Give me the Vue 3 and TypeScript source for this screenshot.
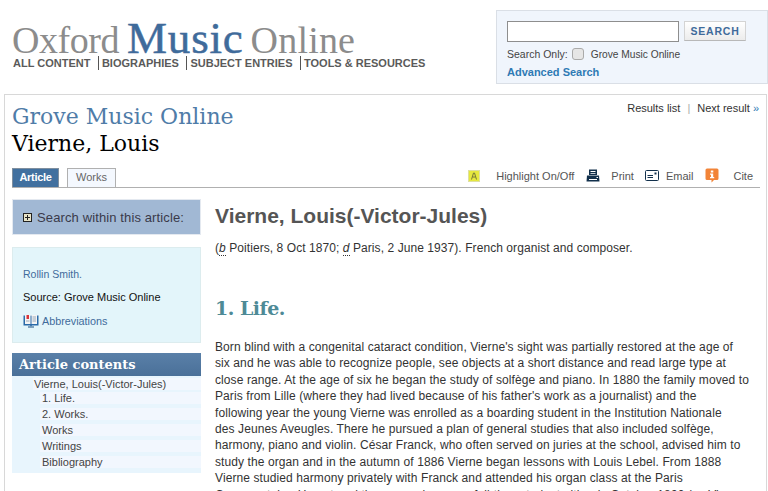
<template>
  <div class="page">
    <header class="top">
      <div class="brand">
        <div class="logo">
          <span class="logo-grey">Oxford</span>
          <span class="logo-blue">Music</span>
          <span class="logo-grey logo-online">Online</span>
        </div>
        <nav class="mainnav">
          <a v-for="(item, i) in navItems" :key="item" :class="{ sep: i > 0 }">{{ item }}</a>
        </nav>
      </div>
      <form class="searchbox" @submit.prevent>
        <div class="search-row">
          <input class="search-input" type="text" />
          <button class="search-btn" type="button">SEARCH</button>
        </div>
        <div class="only-row">
          <span>Search Only:</span>
          <span class="fake-check"></span>
          <span class="only-name">Grove Music Online</span>
        </div>
        <a class="adv">Advanced Search</a>
      </form>
    </header>

    <main class="panel">
      <div class="title-row">
        <div>
          <div class="title-site">Grove Music Online</div>
          <h1 class="title-entry">Vierne, Louis</h1>
        </div>
        <div class="results-nav">
          <a>Results list</a><span class="bar">|</span><a>Next result <span class="raquo">»</span></a>
        </div>
      </div>

      <div class="tabbar">
        <div class="tabs">
          <span class="tab active">Article</span>
          <span class="tab">Works</span>
        </div>
        <div class="tools">
          <span class="tool tool-hl">
            <svg width="12" height="12" viewBox="0 0 12 12">
              <rect width="12" height="12" fill="#dfe0a0" />
              <rect x="1" y="1" width="10" height="10" fill="#e6e83e" />
              <path d="M3.500 9.500 L5.500 3 H6.500 L8.500 9.500 M4.500 7 H7.500" fill="none" stroke="#77773a" />
            </svg>
            <span>Highlight On/Off</span>
          </span>
          <span class="tool tool-print">
            <svg width="14" height="14" viewBox="0 0 14 14">
              <path d="M3 0.500 H11 V6 H3 Z M4.500 2 V3 H9.500 V2 Z M4.500 4 V4.800 H9.500 V4 Z" fill="#12304c" fill-rule="evenodd" />
              <path d="M1 6.500 H13 L13.500 12.500 H0.500 Z" fill="#12304c" />
              <rect x="3" y="10" width="8" height="1" fill="#fff" />
              <rect x="10.500" y="8" width="1.500" height="1" fill="#fff" />
            </svg>
            <span>Print</span>
          </span>
          <span class="tool tool-mail">
            <svg width="14" height="11" viewBox="0 0 14 11">
              <rect x="0.500" y="0.500" width="13" height="10" rx="1" fill="#fff" stroke="#12304c" />
              <path d="M2.500 7.500 H8 M2.500 5.500 H8" stroke="#12304c" fill="none" />
              <rect x="9.500" y="2.500" width="2" height="2" fill="#12304c" />
            </svg>
            <span>Email</span>
          </span>
          <span class="tool tool-cite">
            <svg width="14" height="15" viewBox="0 0 14 15">
              <path d="M2 0.500 H12 Q13.500 0.500 13.500 2 V10.500 Q13.500 12 12 12 H9 L6.500 14.500 V12 H2 Q0.500 12 0.500 10.500 V2 Q0.500 0.500 2 0.500 Z" fill="#f28438" />
              <rect x="5.800" y="2.500" width="2.500" height="2" fill="#fff" />
              <path d="M5 5.500 H8.200 V9 H9.200 V10.200 H5 V9 H6 V6.700 H5 Z" fill="#fff" />
            </svg>
            <span>Cite</span>
          </span>
        </div>
      </div>

      <div class="columns">
        <aside class="side">
          <div class="within">
            <svg class="plus" width="9" height="9" viewBox="0 0 9 9">
              <rect x="0.500" y="0.500" width="8" height="8" fill="#e8e4c8" stroke="#222" />
              <path d="M2 4.500 H7 M4.500 2 V7" stroke="#222" />
            </svg>
            <span>Search within this article:</span>
          </div>

          <div class="info">
            <a class="info-author">Rollin Smith.</a>
            <div class="info-source">Source: Grove Music Online</div>
            <a class="info-abbr">
              <svg width="16" height="14" viewBox="0 0 16 14">
                <path d="M0.500 1.500 H7.500 L8 2 L8.500 1.500 H15.500 V11.500 H9 L8 12.500 L7 11.500 H0.500 Z" fill="#2a6aa8" />
                <rect x="2" y="1" width="5.500" height="9" fill="#f4f4f4" />
                <rect x="8.500" y="1" width="5.500" height="9" fill="#f4f4f4" />
                <rect x="3.500" y="1" width="2.500" height="4" fill="#d8343a" />
                <path d="M9.500 3 H13 M9.500 5 H13 M9.500 7 H13 M3 7 H6.500" stroke="#9aa9b8" />
                <rect x="5" y="12.500" width="6" height="1" fill="#1d4f80" />
              </svg>
              <span>Abbreviations</span>
            </a>
          </div>

          <div class="toc">
            <div class="toc-head">Article contents</div>
            <ul class="toc-list">
              <li class="toc-root"><span>Vierne, Louis(-Victor-Jules)</span></li>
              <li v-for="row in tocRows" :key="row" class="toc-item"><span>{{ row }}</span></li>
            </ul>
          </div>
        </aside>

        <article class="article">
          <h2 class="art-title">Vierne, Louis(-Victor-Jules)</h2>
          <p class="art-lead">(<abbr>b</abbr> Poitiers, 8 Oct 1870; <abbr>d</abbr> Paris, 2 June 1937). French organist and composer.</p>
          <h3 class="art-section">1. Life.</h3>
          <p class="art-body">
            <span v-for="line in bodyLines" :key="line" class="art-line">{{ line }}</span>
          </p>
        </article>
      </div>
    </main>
  </div>
</template>

<script setup lang="ts">
const navItems: string[] = ['ALL CONTENT', 'BIOGRAPHIES', 'SUBJECT ENTRIES', 'TOOLS & RESOURCES']
const tocRows: string[] = ['1. Life.', '2. Works.', 'Works', 'Writings', 'Bibliography']
const bodyLines: string[] = [
  "Born blind with a congenital cataract condition, Vierne's sight was partially restored at the age of",
  'six and he was able to recognize people, see objects at a short distance and read large type at',
  'close range. At the age of six he began the study of solfège and piano. In 1880 the family moved to',
  "Paris from Lille (where they had lived because of his father's work as a journalist) and the",
  'following year the young Vierne was enrolled as a boarding student in the Institution Nationale',
  'des Jeunes Aveugles. There he pursued a plan of general studies that also included solfège,',
  'harmony, piano and violin. César Franck, who often served on juries at the school, advised him to',
  'study the organ and in the autumn of 1886 Vierne began lessons with Louis Lebel. From 1888',
  'Vierne studied harmony privately with Franck and attended his organ class at the Paris',
  'Conservatoire. He entered the organ class as a full-time student either in October 1890 (as Vierne',
]
</script>

<style>
html, body { margin: 0; background: #fff; overflow: hidden; }
</style>

<style scoped>
.page {
  width: 768px; height: 491px; overflow: hidden; box-sizing: border-box;
  font-family: "Liberation Sans", Arial, sans-serif; font-size: 11px; color: #333;
}
a { cursor: pointer; }

.top { display: flex; justify-content: space-between; height: 94px; padding-top: 10px; box-sizing: border-box; }
.brand { padding-left: 12px; }
.logo { display: flex; align-items: baseline; height: 46px; box-sizing: border-box; padding-top: 9px; font-family: "Liberation Serif", serif; white-space: nowrap; }
.logo-grey { font-size: 38px; line-height: 38px; color: #8c8c8c; letter-spacing: -0.45px; }
.logo-online { letter-spacing: 0.2px; }
.logo-blue { margin: 0 7px 0 8px; font-size: 45px; line-height: 38px; letter-spacing: 0.8px; color: #3f6b9b; -webkit-text-stroke: 0.5px #3f6b9b; }
.mainnav { display: flex; padding-left: 1px; font-size: 11px; line-height: 14px; font-weight: 700; color: #5a5a5a; white-space: nowrap; }
.mainnav a + a { margin-left: 7.500px; }
.mainnav .sep { padding-left: 3px; border-left: 1px solid #555; }

.searchbox { width: 272px; height: 74px; box-sizing: border-box; border: 1px solid #dadfe6; background: #f0f5fc; padding: 10px 10px 0; }
.search-row { display: flex; gap: 5px; }
.search-input { width: 172px; height: 21px; box-sizing: border-box; border: 1px solid #8e8e8e; background: #fff; padding: 0; margin: 0; }
.search-btn {
  width: 62px; height: 20px; padding: 0; border: 1px solid #d4d4d4; border-bottom-color: #b8b8b8;
  background: linear-gradient(#fff, #ececec); color: #3f6b9b;
  font: 700 10.500px "Liberation Sans", Arial, sans-serif; letter-spacing: 0.8px;
}
.only-row { display: flex; align-items: center; margin-top: 5px; height: 14px; font-size: 10.500px; color: #444; white-space: nowrap; }
.fake-check { width: 10px; height: 10px; margin: 0 7px 0 4px; border: 1px solid #aaa; border-radius: 3px; background: #e6e6e6; }
.only-name { font-size: 10.200px; }
.adv { display: block; margin-top: 4px; font-size: 11px; line-height: 14px; font-weight: 700; color: #2e7ab4; }

.panel { margin-left: 4px; width: 763px; height: 420px; box-sizing: border-box; border: 1px solid #d8d8d8; padding: 0 6px 0 7px; }
.title-row { display: flex; justify-content: space-between; height: 69px; }
.title-site { margin-top: 8px; font-family: "DejaVu Serif", serif; font-size: 22px; line-height: 27px; color: #4f7ca8; }
.title-entry { margin: 0; font-family: "DejaVu Serif", serif; font-size: 22px; line-height: 27px; font-weight: 400; color: #000; }
.results-nav { margin-top: 6px; padding-right: 1px; font-size: 11px; line-height: 14px; color: #333; white-space: nowrap; }
.bar { margin: 0 7px; color: #aaa; }
.raquo { color: #2e7ab4; }

.tabbar { display: flex; justify-content: space-between; align-items: flex-end; height: 23px; border-bottom: 1px solid #b0b0b0; }
.tabs { display: flex; gap: 8px; }
.tab { height: 19px; box-sizing: border-box; padding: 0 8px; border: 1px solid #b0b0b0; border-bottom: 0; background: #f4f8fe; font-size: 11px; line-height: 16px; color: #666; }
.tab.active { width: 47px; padding: 0; text-align: center; background: #41709f; border-color: #7f8f9f; color: #fff; font-weight: 700; letter-spacing: -0.3px; }
.tools { display: flex; align-items: center; height: 23px; padding-right: 7px; font-size: 11px; color: #555; white-space: nowrap; }
.tool { display: flex; align-items: center; }
.tool-hl { gap: 16px; }
.tool-print { gap: 11px; margin-left: 12px; }
.tool-mail { gap: 7px; margin-left: 11px; }
.tool-cite { gap: 14px; margin-left: 12px; }

.columns { display: flex; gap: 14px; margin-top: 11px; }
.side { width: 189px; flex: none; }
.within { display: flex; align-items: center; gap: 5px; height: 36px; box-sizing: border-box; padding-left: 10px; background: #a1b8d4; border: 1px solid #e4e9f0; font-size: 13px; letter-spacing: 0.12px; color: #3a3a4a; }
.info { height: 96px; margin-top: 12px; box-sizing: border-box; border: 1px solid #dcecee; background: #e3f5fa; padding: 19px 10px 0; font-size: 10.500px; }
.info-author { display: block; line-height: 14px; color: #3f6b9b; }
.info-source { margin-top: 9px; font-size: 11px; line-height: 14px; color: #111; }
.info-abbr { display: flex; align-items: center; gap: 3px; margin-top: 10px; font-size: 10.800px; color: #3f6b9b; }
.toc { margin-top: 10px; }
.toc-head { height: 23px; padding-left: 7px; background: linear-gradient(#5a80a8, #4a7099); color: #fff; font-family: "DejaVu Serif", serif; font-weight: 700; font-size: 13px; line-height: 23px; }
.toc-list { list-style: none; margin: 0; padding: 2px 0 5px; background: #e8f5fd; font-size: 11px; color: #444; }
.toc-root { height: 12px; margin-left: 21px; padding-left: 1px; margin-bottom: 2px; background: #f2f7fe; line-height: 12px; }
.toc-item { height: 12px; margin-left: 28px; padding-left: 2px; margin-top: 4px; background: #f2f7fe; line-height: 12px; }
.toc-root + .toc-item { margin-top: 0; }

.article { width: 545px; flex: none; padding-top: 4px; }
.art-title { margin: 0; font-size: 21px; line-height: 26px; font-weight: 700; color: #555; }
.art-lead { margin: 11px 0 0; font-size: 12px; line-height: 16px; letter-spacing: 0.07px; color: #333; }
abbr { font-style: italic; border-bottom: 1px dotted #333; }
.art-section { margin: 40px 0 0; font-family: "DejaVu Serif", serif; font-size: 19px; line-height: 24px; font-weight: 700; letter-spacing: -0.5px; color: #4e8a96; }
.art-body { margin: 19px 0 0; font-size: 12px; line-height: 16.400px; letter-spacing: 0.09px; color: #333; }
.art-line { display: block; white-space: nowrap; }
</style>
